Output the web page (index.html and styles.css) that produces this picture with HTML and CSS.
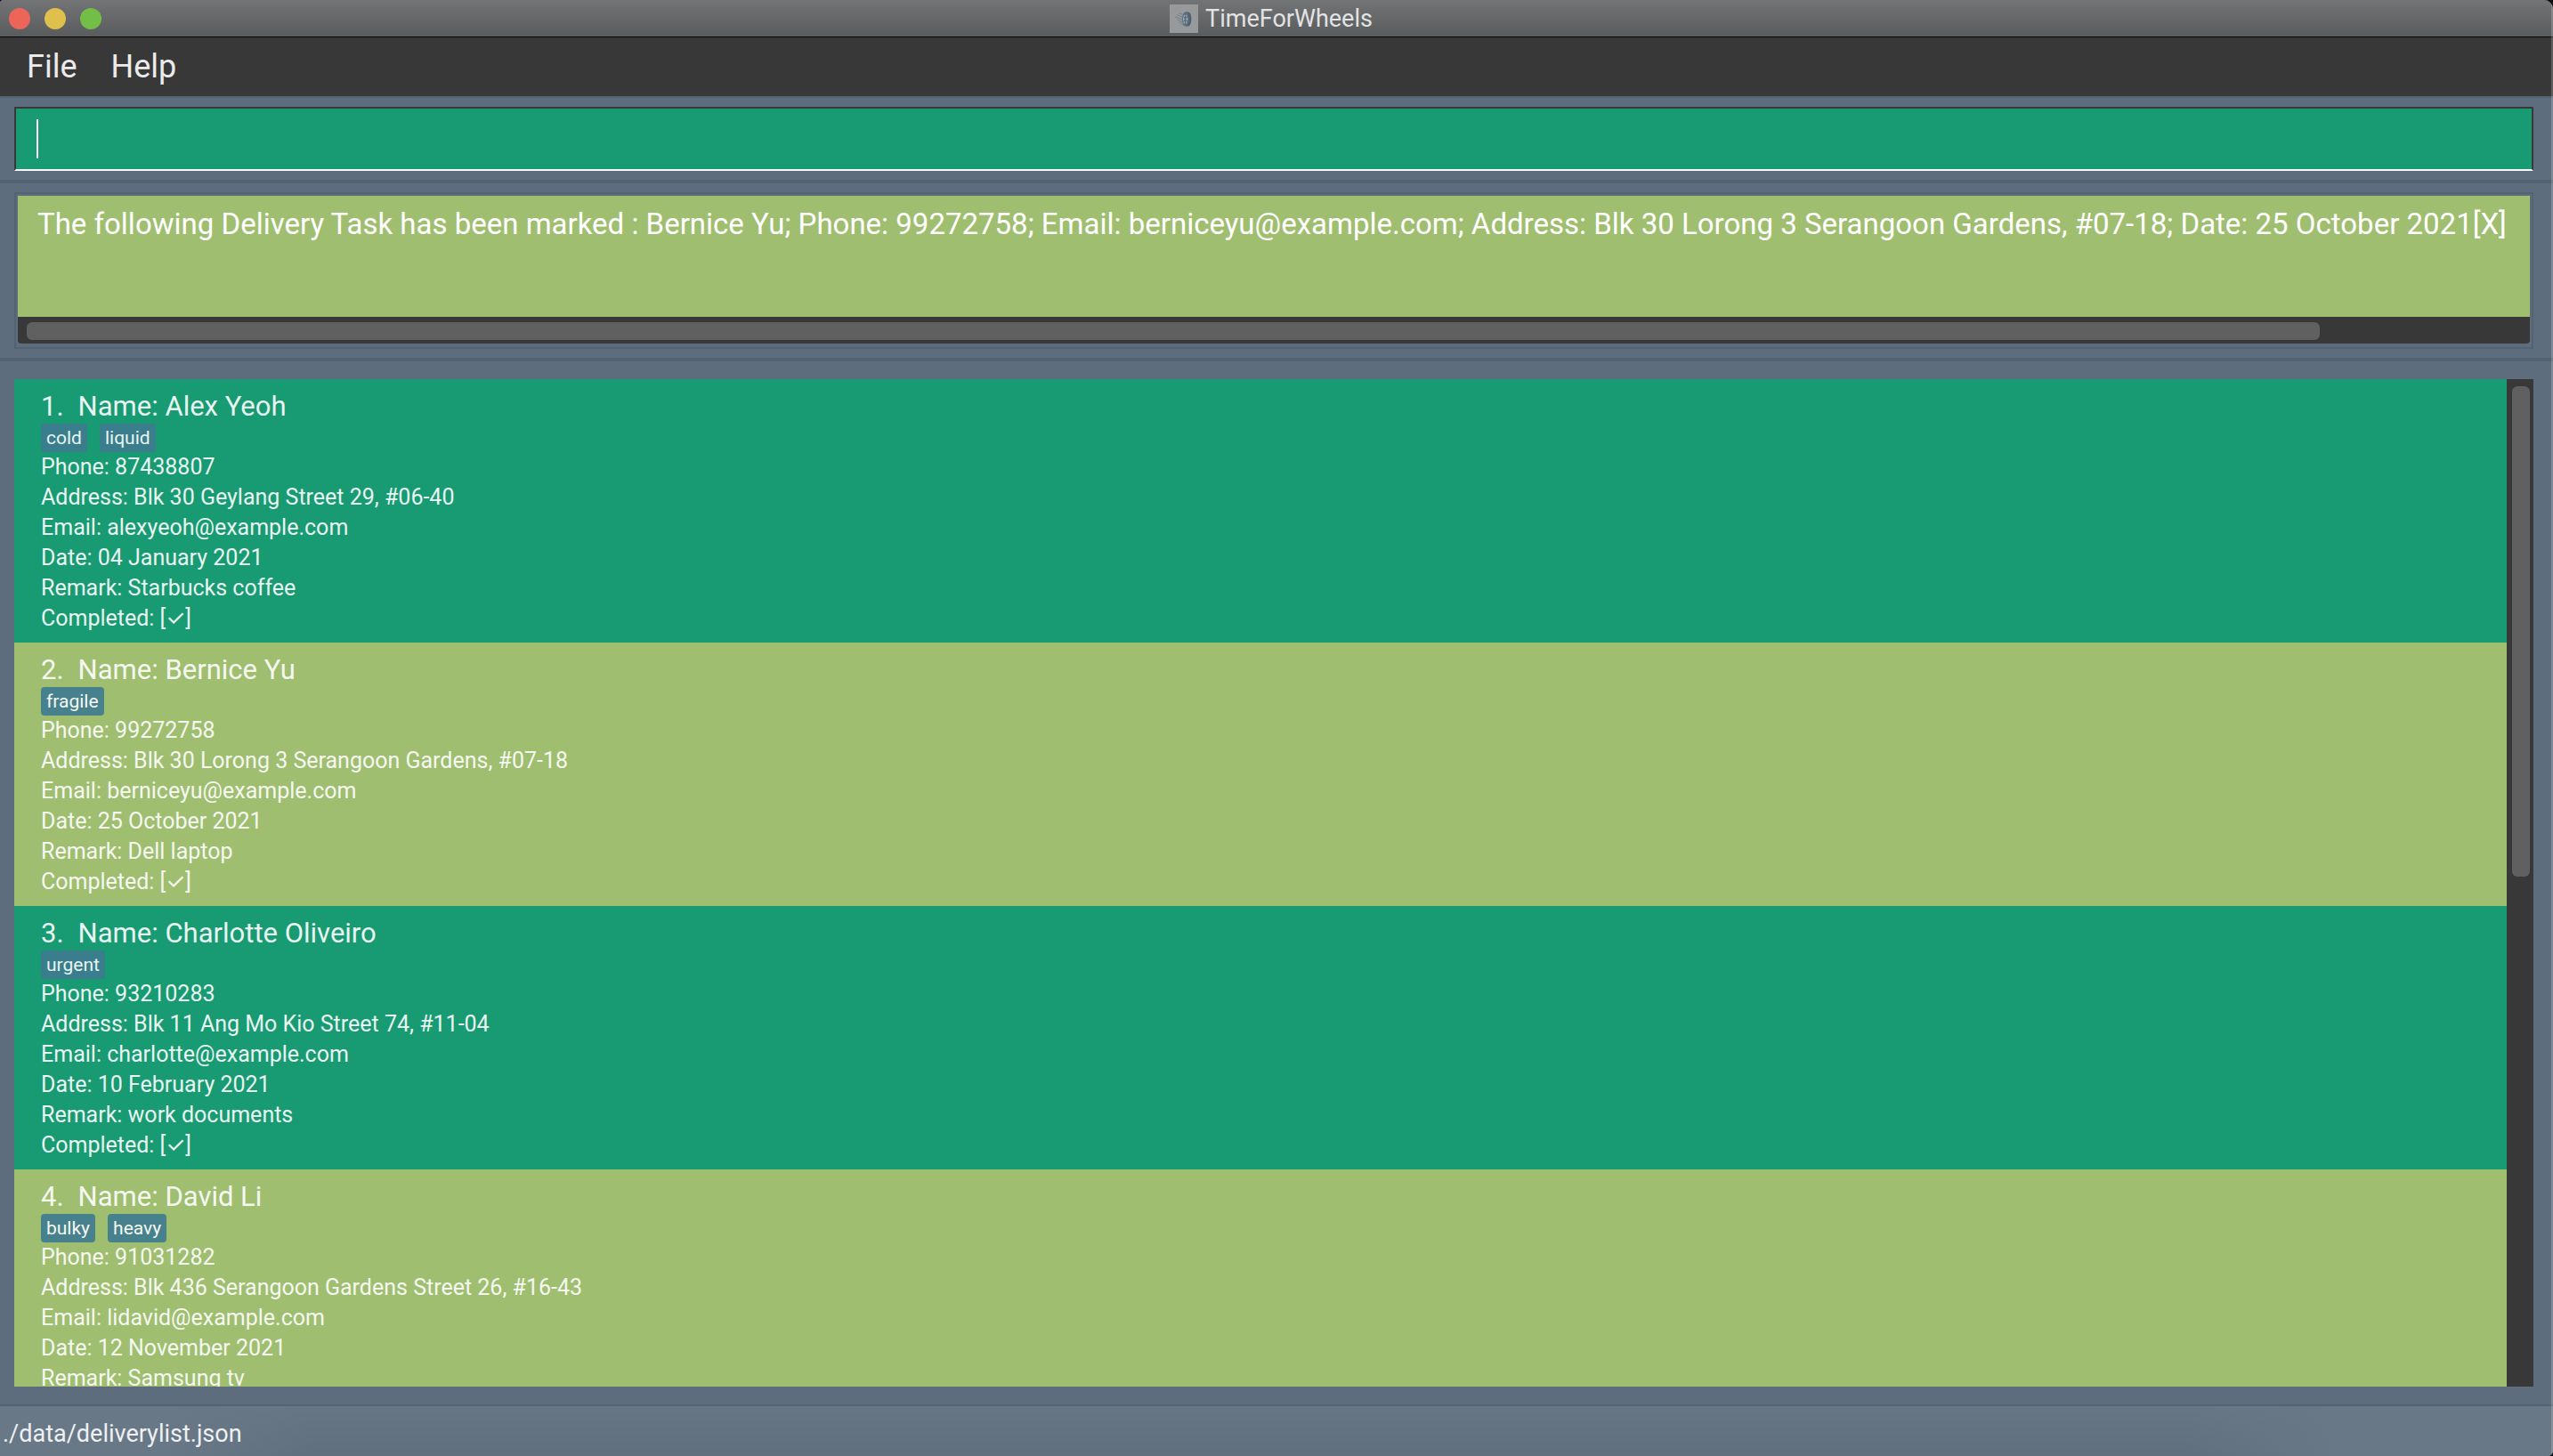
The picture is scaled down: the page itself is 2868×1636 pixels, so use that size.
FILE: index.html
```
<!DOCTYPE html>
<html lang="en">
<head>
<meta charset="utf-8">
<title>TimeForWheels</title>
<link rel="stylesheet" href="styles.css">
</head>
<body>
<div class="window">
  <header class="titlebar">
    <div class="lights">
      <button class="light light-close" type="button" aria-label="Close"></button>
      <button class="light light-minimise" type="button" aria-label="Minimise"></button>
      <button class="light light-zoom" type="button" aria-label="Zoom"></button>
    </div>
    <div class="app-title">
      <svg class="app-icon" viewBox="0 0 32 32" aria-hidden="true">
        <rect width="32" height="32" fill="#98999b"/>
        <path d="M18 8.500h2.500c2.500 0 3.800 3.500 3.800 8s-1.500 8-4 8H18z" fill="#4d6072"/>
        <ellipse cx="18" cy="16.500" rx="4" ry="8" fill="#5b6d7d"/>
        <ellipse cx="17.600" cy="16.500" rx="2.600" ry="5.600" fill="#a5abb0"/>
        <path d="M17.600 11v11M15.500 13.500l4.200 6M15.500 19.500l4.200-6" stroke="#5b6d7d" stroke-width="1.200"/>
        <path d="M6.500 14l7.500 3M8 11.500l6.500 3M8.500 17l6 3M10.500 20l5 3.500M10 9.500l5 2" stroke="#6f7d89" stroke-width="0.900"/>
      </svg>
      <span>TimeForWheels</span>
    </div>
  </header>

  <nav class="menubar">
    <button class="menu" type="button">File</button>
    <button class="menu" type="button">Help</button>
  </nav>

  <section class="pane command-pane">
    <div class="command">
      <input class="command-input" type="text" aria-label="Command">
      <span class="caret"></span>
    </div>
  </section>

  <section class="pane result-pane">
    <div class="result">
      <textarea class="result-text" aria-label="Result" wrap="off" readonly>The following Delivery Task has been marked : Bernice Yu; Phone: 99272758; Email: berniceyu@example.com; Address: Blk 30 Lorong 3 Serangoon Gardens, #07-18; Date: 25 October 2021[X]</textarea>
      <div class="track track-x"><div class="thumb" style="width:92%"></div></div>
    </div>
  </section>

  <main class="list-pane">
    <ol class="list">
      <li class="card">
        <h2 class="name"><span>1.</span><span>Name: Alex Yeoh</span></h2>
        <div class="tags"><span class="tag">cold</span><span class="tag">liquid</span></div>
        <p>Phone: 87438807</p>
        <p>Address: Blk 30 Geylang Street 29, #06-40</p>
        <p>Email: alexyeoh@example.com</p>
        <p>Date: 04 January 2021</p>
        <p>Remark: Starbucks coffee</p>
        <p>Completed: [<span class="tick">✓</span>]</p>
      </li>
      <li class="card">
        <h2 class="name"><span>2.</span><span>Name: Bernice Yu</span></h2>
        <div class="tags"><span class="tag">fragile</span></div>
        <p>Phone: 99272758</p>
        <p>Address: Blk 30 Lorong 3 Serangoon Gardens, #07-18</p>
        <p>Email: berniceyu@example.com</p>
        <p>Date: 25 October 2021</p>
        <p>Remark: Dell laptop</p>
        <p>Completed: [<span class="tick">✓</span>]</p>
      </li>
      <li class="card">
        <h2 class="name"><span>3.</span><span>Name: Charlotte Oliveiro</span></h2>
        <div class="tags"><span class="tag">urgent</span></div>
        <p>Phone: 93210283</p>
        <p>Address: Blk 11 Ang Mo Kio Street 74, #11-04</p>
        <p>Email: charlotte@example.com</p>
        <p>Date: 10 February 2021</p>
        <p>Remark: work documents</p>
        <p>Completed: [<span class="tick">✓</span>]</p>
      </li>
      <li class="card">
        <h2 class="name"><span>4.</span><span>Name: David Li</span></h2>
        <div class="tags"><span class="tag">bulky</span><span class="tag">heavy</span></div>
        <p>Phone: 91031282</p>
        <p>Address: Blk 436 Serangoon Gardens Street 26, #16-43</p>
        <p>Email: lidavid@example.com</p>
        <p>Date: 12 November 2021</p>
        <p>Remark: Samsung tv</p>
      </li>
    </ol>
    <div class="track track-y"><div class="thumb" style="height:49%"></div></div>
  </main>

  <footer class="statusbar">./data/deliverylist.json</footer>
</div>
</body>
</html>
```
FILE: styles.css
```
* { box-sizing: border-box; }

body {
  margin: 0;
  background: #101010;
  font-family: Roboto, "Liberation Sans", sans-serif;
  color: #fff;
}

button, input, textarea { font: inherit; color: inherit; }

.window {
  position: relative;
  display: flex;
  flex-direction: column;
  height: 100vh;
  overflow: hidden;
  border-radius: 4px 10px 6px 0;
  background: #5d6d7e;
}

/* light rim on the window's right side */
.window::after {
  content: "";
  position: absolute;
  inset: 0 0 0 auto;
  width: 2px;
  background: rgba(255, 255, 255, 0.2);
}

.titlebar {
  display: grid;
  grid-template-columns: 1fr auto 1fr;
  align-items: center;
  flex: none;
  height: 42px;
  padding: 0 22px 0 10px;
  border-bottom: 1px solid #000;
  background: linear-gradient(#727476, #5a5b5c);
}

.lights { display: flex; gap: 16px; }

.light {
  width: 24px;
  height: 24px;
  padding: 0;
  border: 0;
  border-radius: 50%;
}
.light-close { background: #ed6559; }
.light-minimise { background: #e0c04c; }
.light-zoom { background: #72be47; }

.app-title {
  display: flex;
  align-items: center;
  gap: 8px;
  font-size: 27px;
  line-height: 32px;
  color: #e2e3e4;
}
.app-icon { width: 32px; height: 32px; }

.menubar {
  display: flex;
  flex: none;
  gap: 38px;
  height: 66px;
  padding: 0 30px;
  background: #383838;
}
.menu {
  padding: 0;
  border: 0;
  background: none;
  font-size: 36px;
  color: #ebebeb;
}

.pane {
  flex: none;
  padding: 10px 22px 10px 16px;
  border-top: 2px solid #536371;
  border-bottom: 2px solid #536371;
}

.command { position: relative; }
.command-input {
  display: block;
  width: 100%;
  height: 72px;
  padding: 0 22px;
  border: 2px solid #383838;
  border-bottom-color: #fff;
  border-radius: 0;
  background: #189a72;
  font-size: 33px;
  outline: 0;
}
.caret {
  position: absolute;
  top: 14px;
  left: 25px;
  width: 2px;
  height: 44px;
  background: #fff;
}

.result {
  padding: 2px 2px 4px;
  border: 2px solid #536371;
}
.result-text {
  display: block;
  width: 100%;
  height: 136px;
  padding: 12px 0 0 22px;
  border: 0;
  background: #9fbe70;
  font-size: 33px;
  line-height: 40px;
  resize: none;
  overflow: hidden;
  outline: 0;
}

.track { background: #383838; }
.thumb { height: 100%; border-radius: 6px; background: #606060; }
.track-x {
  height: 30px;
  padding: 6px 12px 4px 10px;
  border-radius: 0 0 4px 4px;
}
.track-y {
  flex: none;
  width: 30px;
  padding: 8px 4px 0 6px;
}

.result-pane { border-bottom-width: 4px; }

.list-pane {
  display: flex;
  flex: 1;
  min-height: 0;
  padding: 20px 22px 20px 16px;
}
.list {
  flex: 1;
  margin: 0;
  padding: 0;
  overflow: hidden;
  list-style: none;
}
.card {
  min-height: 296px;
  padding: 12px 30px 10px;
  background: #189a72;
  font-size: 25px;
  line-height: 34px;
}
.card:nth-child(even) { background: #9fbe70; }
.card > * { opacity: 0.9; }
.card p { margin: 0; }

.name {
  display: flex;
  gap: 16px;
  margin: 0;
  font-size: 31px;
  font-weight: 400;
  line-height: 38px;
}

.tags { display: flex; gap: 14px; }
.tag {
  padding: 0 6px;
  border-radius: 4px;
  background: #3e7b91;
  font-size: 21px;
  line-height: 32px;
}
.tick { font-family: Inter, "DejaVu Sans", sans-serif; line-height: 1; }

.statusbar {
  flex: none;
  height: 58px;
  padding: 10px 3px 0;
  border-top: 2px solid #536371;
  background:
    linear-gradient(90deg, #687887 180px, transparent 360px, transparent calc(100% - 420px), #687887 calc(100% - 240px)),
    linear-gradient(#667685, #5f6f7e);
  font-size: 27px;
  line-height: 42px;
  color: #eef0f2;
}
```
